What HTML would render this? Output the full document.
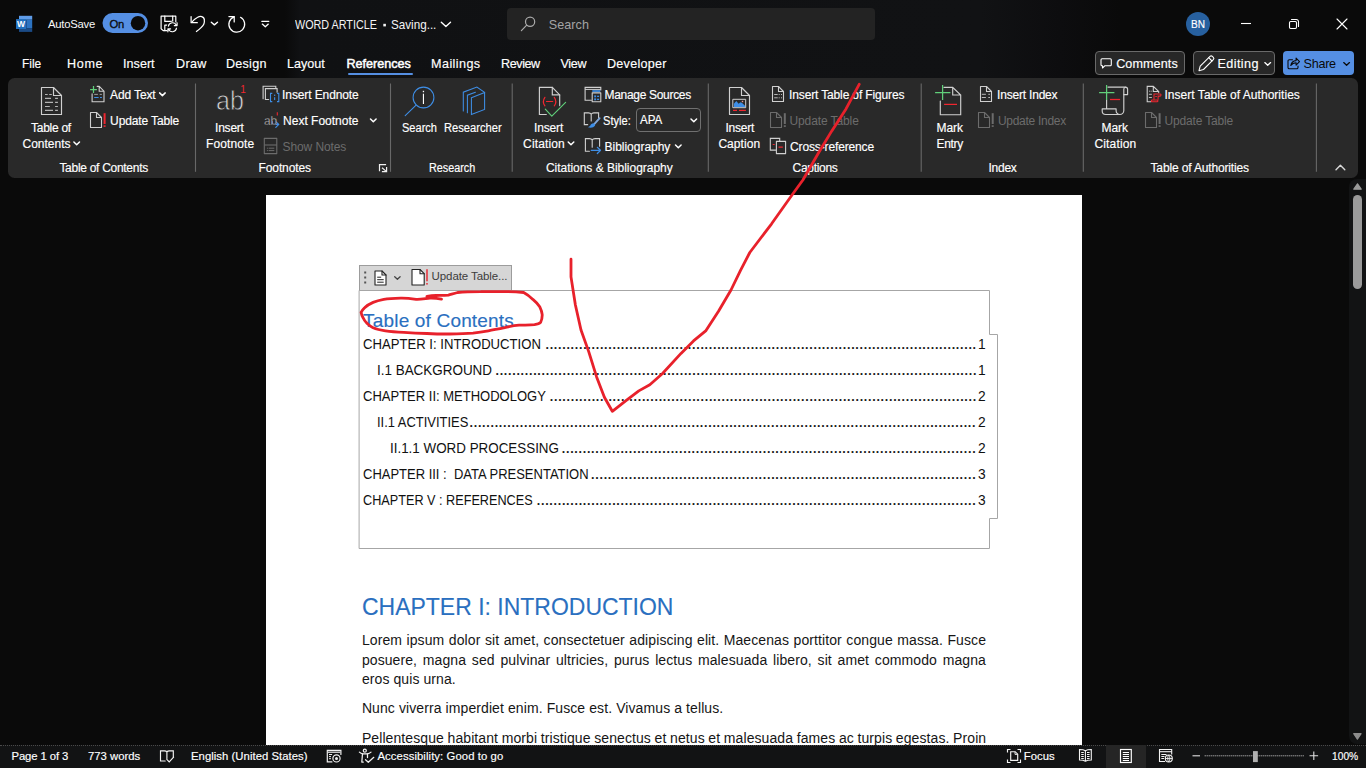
<!DOCTYPE html>
<html lang="en"><head><meta charset="utf-8"><title>WORD ARTICLE - Word</title>
<style>
html,body{margin:0;padding:0;}
body{width:1366px;height:768px;overflow:hidden;background:#0a0a0a;position:relative;font-family:"Liberation Sans",sans-serif;}
.t{position:absolute;white-space:pre;line-height:1;transform-origin:0 0;}
.b{position:absolute;box-sizing:border-box;}
svg.ov{position:absolute;left:0;top:0;}
</style></head><body>
<div class="b" style="left:0;top:0;width:1366px;height:78px;background:linear-gradient(90deg,#0a0a0a 0,#0a0a0a 285px,#101113 300px,#111214 980px,#0d0d0f 1060px,#0a0a0a 1120px,#0a0a0a 100%)"></div>
<div class="b" style="left:507px;top:8px;width:368px;height:32px;background:#232323;border-radius:4px"></div>
<div class="b" style="left:8px;top:78px;width:1350px;height:99.5px;background:#292929;border-radius:6.5px"></div>
<div class="b" style="left:266px;top:195px;width:815.5px;height:550px;background:#fff"></div>
<div class="b" style="left:1349px;top:179px;width:17px;height:565px;background:#121314;border-radius:8px 0 0 8px"></div>
<div class="b" style="left:1353px;top:194.5px;width:9px;height:94px;background:#9a9a9a;border-radius:4.5px"></div>
<div class="b" style="left:0;top:745px;width:1366px;height:23px;background:#121314;border-top:1px dotted #4a4a4a"></div>
<div class="b" style="left:1106px;top:745px;width:40px;height:23px;background:#252525"></div>
<div class="b" style="left:347.500px;top:72.700px;width:65px;height:2.500px;background:#558fe3;border-radius:1.200px"></div>
<div class="b" style="left:1095px;top:51px;width:90px;height:24px;background:#272727;border:1px solid #6a6a6a;border-radius:4px"></div>
<div class="b" style="left:1193px;top:51px;width:82px;height:24px;background:#272727;border:1px solid #6a6a6a;border-radius:4px"></div>
<div class="b" style="left:1283px;top:51px;width:71px;height:24px;background:#558fe3;border-radius:4px"></div>
<div class="b" style="left:636.300px;top:108.200px;width:64.500px;height:23.800px;border:1px solid #707070;border-radius:4px"></div>
<div class="b" style="left:359px;top:264.500px;width:153px;height:26.500px;background:#d6d6d6;border:1px solid #9c9c9c"></div>
<svg class="ov" width="1366" height="768" viewBox="0 0 1366 768" fill="none" stroke-linecap="round" stroke-linejoin="round" style="font-family:'Liberation Sans',sans-serif">
<g stroke="none"><rect x="19" y="15.800" width="13.200" height="3.900" fill="#5f9ce8"/><rect x="19" y="19.600" width="13.200" height="8.600" fill="#2c73c2"/><rect x="19" y="28.100" width="13.200" height="3.800" fill="#1b4b86"/><rect x="25.800" y="20" width="1" height="8.500" fill="#1d4f8c"/><rect x="16" y="19.100" width="10" height="9.900" fill="#2370bf"/><text x="21" y="27.300" font-size="8.500" font-weight="700" fill="#fff" text-anchor="middle">W</text></g>
<rect x="102.5" y="13" width="45.5" height="20" rx="10" fill="#558fe3" stroke="none"/><circle cx="138" cy="23.2" r="7.2" fill="#0a0a0a" stroke="none"/>
<g stroke="#fff" stroke-width="1.2"><path d="M167.2 30.600H163.200L161.100 28.700V16.100H175.800V22.500"/><path d="M164.800 16.100V21.400H172.700V16.100"/><path d="M164.800 30.600V25.200H167"/><circle cx="172.600" cy="27.300" r="5.900" fill="#0a0a0a" stroke="none"/><path d="M168.400 26.200A4.100 4.100 0 0 1 176.300 25.400M177.100 22.700V25.600H174.300" stroke-width="1.150"/><path d="M176.500 28.200A4.100 4.100 0 0 1 168.600 29.100M167.900 31.800V28.900H170.600" stroke-width="1.150"/></g>
<g stroke="#fff" stroke-width="1.25"><path d="M191.100 16.600V22.700H197.300"/><path d="M191.600 22.300C193.600 19.800 195.500 18.400 197.300 17.500C199 16.600 200.500 16.300 201.700 16.600C203.300 17 204.200 18.200 204.300 19.700C204.500 21.200 204.400 22.600 203.900 24.100C202.800 26.500 200.500 28.600 196.400 31.500"/><path d="M211.300 22.300l3.100 2.600 3.100-2.600" stroke-width="1.400"/></g>
<g stroke="#fff" stroke-width="1.25"><path d="M228.900 16.600H234.200V21.900"/><path d="M240.500 17.300A7.900 7.900 0 1 1 234.200 16.800"/></g>
<g stroke="#fff" stroke-width="1.3"><path d="M261.800 21.300h7"/><path d="M262.300 24.100l3 2.700 3-2.700"/></g>
<rect x="383.300" y="23.800" width="2.600" height="2.600" fill="#f4f4f4" stroke="none"/>
<path d="M441.300 22.200l4.600 4.300 4.600-4.300" stroke="#fff" stroke-width="1.400"/>
<g stroke="#ababab" stroke-width="1.200"><circle cx="530.100" cy="21.700" r="4.600"/><path d="M526.700 25.200L521.400 30.700"/></g>
<circle cx="1198" cy="24" r="12" fill="#27609f" stroke="none"/>
<g stroke="#fff" stroke-width="1.100"><path d="M1241 23.500H1251" stroke-linecap="butt"/><rect x="1289.500" y="21.500" width="7" height="7" rx="1.200"/><path d="M1291.500 19.500H1296.300A2.200 2.200 0 0 1 1298.500 21.700V26.500"/><path d="M1337 19L1347 29M1347 19L1337 29"/></g>
<path d="M1102 58.700h8.300a1 1 0 0 1 1 1v5a1 1 0 0 1-1 1h-5.300l-2.500 2.300v-2.300h-.500a1 1 0 0 1-1-1v-5a1 1 0 0 1 1-1z" stroke="#fff" stroke-width="1.100"/>
<g stroke="#fff" stroke-width="1.100"><path d="M1199 70.700l1.200-4.500 9.800-9.800a1.700 1.700 0 0 1 2.400 0l.900.900a1.700 1.700 0 0 1 0 2.400l-9.800 9.800z"/><path d="M1208.700 57.700l3.300 3.300"/></g>
<path d="M1264.800 62.600l2.900 2.700 2.900-2.700" stroke="#fff" stroke-width="1.300"/>
<g stroke="#0a0a0a" stroke-width="1.100"><path d="M1292.500 59.700h-3.200a1.300 1.300 0 0 0-1.300 1.300v6.400a1.300 1.300 0 0 0 1.300 1.300h7.400a1.300 1.300 0 0 0 1.300-1.300v-1.400"/><path d="M1290.800 65.500c.600-3 2.600-4.800 5.300-4.900v-2.500l3.400 3.500-3.400 3.500v-2.400c-2.300 0-3.900.800-5.300 2.800z"/></g>
<path d="M1343.700 62.600l2.900 2.700 2.900-2.700" stroke="#0a0a0a" stroke-width="1.300"/>
<path d="M195.5 83.500V171.800" stroke="#686868" stroke-width="1.100" stroke-linecap="butt"/>
<path d="M390.5 83.500V171.800" stroke="#686868" stroke-width="1.100" stroke-linecap="butt"/>
<path d="M512.2 83.500V171.800" stroke="#686868" stroke-width="1.100" stroke-linecap="butt"/>
<path d="M708.3 83.500V171.800" stroke="#686868" stroke-width="1.100" stroke-linecap="butt"/>
<path d="M921.2 83.500V171.800" stroke="#686868" stroke-width="1.100" stroke-linecap="butt"/>
<path d="M1083.3 83.500V171.800" stroke="#686868" stroke-width="1.100" stroke-linecap="butt"/>
<path d="M1316.4 83.500V171.800" stroke="#686868" stroke-width="1.100" stroke-linecap="butt"/>
<path d="M41.5 87.5h12.0l8 8v19.0h-20.0z" stroke="#d0d0d0" stroke-width="1.15"/><path d="M53.5 87.5v8h8" stroke="#d0d0d0" stroke-width="1.15"/>
<g stroke="#b4b4b4" stroke-width="1.150" stroke-linecap="butt"><path d="M45 94.500H47.700M49.200 94.500H51.800"/><path d="M45 98.400H51M55.100 98.400H57.900"/><path d="M45 102.400H53M55.100 102.400H57.900"/><path d="M45 106.500H49.800M55.100 106.500H57.900"/><path d="M45 110.400H53M55.100 110.400H57.900"/></g>
<path d="M73.9 142l2.8 2.7l2.8 -2.7" stroke="#ffffff" stroke-width="1.5"/>
<path d="M97.200 86.400H99.200L104 91.200V101.700H92.100V93.900M99.200 86.400V91.200H104" stroke="#d0d0d0" stroke-width="1.100" stroke-linejoin="miter"/>
<path d="M90.100 89.500H96.900M93.500 86.100V92.900" stroke="#60cf7a" stroke-width="1.250" stroke-linecap="butt"/>
<path d="M94.200 94.400H97.900M99.700 94.400H101.900" stroke="#9c9c9c" stroke-width="1" stroke-linecap="butt"/>
<path d="M94.200 97.500H98.600M100 97.500H101.900" stroke="#3e8ee6" stroke-width="1.100" stroke-linecap="butt"/>
<path d="M159.6 92.9l2.8 2.7l2.8 -2.7" stroke="#ffffff" stroke-width="1.5"/>
<path d="M90.5 112.5h6.0l5 5v10.0h-11.0z" stroke="#d0d0d0" stroke-width="1.1"/><path d="M96.5 112.5v5h5" stroke="#d0d0d0" stroke-width="1.1"/><path d="M104.6 113.200V124" stroke="#f0262f" stroke-width="2" stroke-linecap="butt"/><rect x="103.6" y="125.300" width="2" height="1.600" fill="#f0262f" stroke="none"/>
<path d="M263.100 98.800V86.300H275.800V88" stroke="#d0d0d0" stroke-width="1.100" stroke-linejoin="miter"/><path d="M268.700 99.500H265.400V88.600H277.100V92.200" stroke="#d0d0d0" stroke-width="1.100" stroke-linejoin="miter"/><path d="M272.300 93.400H270.500V101.600H272.300M277 93.400H278.800V101.600H277" stroke="#3e8ee6" stroke-width="1.100" stroke-linejoin="miter" stroke-linecap="butt"/><path d="M274.650 97.200V100.100" stroke="#3e8ee6" stroke-width="1.100" stroke-linecap="butt"/><rect x="274.050" y="94.600" width="1.200" height="1.300" fill="#3e8ee6" stroke="none"/>
<path d="M277.300 112.300V115.600" stroke="#f0262f" stroke-width="1.100" stroke-linecap="butt"/>
<path d="M272.300 121.500c-.100 1.900.200 2.900 1.600 2.900H278.300M275.800 121.600L278.800 124.400L275.800 127.400" stroke="#3e8ee6" stroke-width="1.200"/>
<path d="M370.5 119l2.8 2.7l2.8 -2.7" stroke="#ffffff" stroke-width="1.5"/>
<rect x="264.300" y="138.400" width="12.500" height="15.200" stroke="#6c6c6c" stroke-width="1.100"/><path d="M264.300 145H276.800" stroke="#6c6c6c" stroke-width="1.100" stroke-linecap="butt"/><path d="M266.900 148.200h1M268.700 148.200h5.600M266.900 150.600h1M268.700 150.600h5.600" stroke="#6c6c6c" stroke-width="1" stroke-linecap="butt"/>
<path d="M379.500 171.200V164.600H386.100M382 167.800L386 171.100M386.600 166.900V171.600H381.900" stroke="#f0f0f0" stroke-width="1.200" stroke-linecap="butt" stroke-linejoin="miter"/>
<circle cx="423.500" cy="97.500" r="10.400" stroke="#3e8ee6" stroke-width="1.050"/><path d="M416.100 105.100L405.200 115.700" stroke="#3e8ee6" stroke-width="1.100"/><path d="M423.450 93.700v10.300" stroke="#fff" stroke-width="1.150" stroke-linecap="butt"/><rect x="422.800" y="90.800" width="1.300" height="1.400" fill="#fff" stroke="none"/>
<g stroke="#3e8ee6" stroke-width="1.050" stroke-linejoin="miter"><path d="M463.300 110.900V92.200L476.900 87.100L484.600 92.400"/><path d="M467.400 112.700V95.200L475.400 92.200"/><path d="M471.400 97.700L484.600 92.600V109.500L471.400 114.600Z"/></g>
<path d="M546.300 114.500H539.400V87.400H552.300L559.700 94.900V105.600" stroke="#d0d0d0" stroke-width="1.150" stroke-linejoin="miter"/><path d="M552.300 87.400V94.900H559.700" stroke="#d0d0d0" stroke-width="1.150" stroke-linejoin="miter"/>
<path d="M544.900 97.300C543 100 543 103.200 544.900 105.800M554.300 97.300C556.200 100 556.200 103.200 554.300 105.800M546.500 101.500h6.200" stroke="#f0262f" stroke-width="1.200"/>
<path d="M545.300 109.200L551.800 116.200L565.600 102.300" stroke="#60cf7a" stroke-width="1.150"/>
<path d="M568.2 142l2.8 2.7l2.8 -2.7" stroke="#ffffff" stroke-width="1.5"/>
<path d="M591.400 100.300H585.100V87.400H600.800V90" stroke="#d0d0d0" stroke-width="1.100" stroke-linejoin="miter"/><path d="M585.100 89.400H600.800" stroke="#d0d0d0" stroke-width="1" stroke-linecap="butt"/><rect x="592.200" y="92.900" width="8.600" height="8.900" stroke="#d0d0d0" stroke-width="1.100"/><rect x="592.300" y="90.200" width="8" height="1.700" fill="#3e8ee6" stroke="none"/><g fill="#3e8ee6" stroke="none"><rect x="594.200" y="95.400" width="1.900" height="1.900"/><rect x="597.100" y="95.700" width="2" height="1.300"/><rect x="594.200" y="98.400" width="1.900" height="1.900"/><rect x="597.100" y="98.700" width="2" height="1.300"/></g>
<path d="M587.700 124.600H584.300V112.900H588.500C589.800 112.900 590.700 113.400 591.200 114.200C591.700 113.400 592.600 112.900 593.900 112.900H598.600V117.600M591.200 114.200V121" stroke="#d0d0d0" stroke-width="1.100" stroke-linejoin="miter"/><path d="M599.600 118.200L593.600 124.800" stroke="#7fa6d9" stroke-width="1.900"/><path d="M593.900 123.600c-1.300-.500-2.600 0-3.300 1.300-.500.900-1.300 1.700-2.700 2.300 2.800 1 5.800.400 7-1.500.500-.800.100-1.600-1-2.100z" fill="#3e8ee6" stroke="none"/>
<path d="M691 119l2.8 2.7l2.8 -2.7" stroke="#ffffff" stroke-width="1.5"/>
<path d="M589.400 151.300H585.400V138.600H589.400C590.800 138.600 591.700 139.100 592.200 139.900C592.700 139.100 593.600 138.600 595 138.600H599.600V146.200M592.200 139.900V147.300" stroke="#d0d0d0" stroke-width="1.100" stroke-linejoin="miter"/><path d="M591.200 150.300H600.300M597.300 147.300L600.500 150.300L597.300 153.500" stroke="#3e8ee6" stroke-width="1.200"/>
<path d="M675.5 145l2.8 2.7l2.8 -2.7" stroke="#ffffff" stroke-width="1.5"/>
<path d="M729.5 87.5h12.0l8 8v19.0h-20.0z" stroke="#d0d0d0" stroke-width="1.15"/><path d="M741.5 87.5v8h8" stroke="#d0d0d0" stroke-width="1.15"/>
<rect x="733.200" y="99.300" width="12.500" height="8.400" stroke="#d0d0d0" stroke-width="1"/><path d="M733.900 107v-3.200l2.400-2.700 2.300 2.600 1.900-1.500 1.600.900 2.900 2.700v1.200z" fill="#3e8ee6" stroke="none"/><rect x="741.800" y="100.800" width="1.400" height="1.400" fill="#e89a9a" stroke="none"/><path d="M733 110.400H737M739 110.400H745.900" stroke="#f0262f" stroke-width="1.300" stroke-linecap="butt"/>
<path d="M772.5 86.5h6.0l5 5v10.0h-11.0z" stroke="#d0d0d0" stroke-width="1.1"/><path d="M778.5 86.5v5h5" stroke="#d0d0d0" stroke-width="1.1"/>
<path d="M774.200 94.500H777.700M778.700 94.500H779.700M781 94.500H782M774.200 97.800H777.700M778.700 97.800H779.700M781 97.800H782" stroke="#b8b8b8" stroke-width="1" stroke-linecap="butt"/>
<path d="M770.5 112.5h6.0l5 5v10.0h-11.0z" stroke="#6c6c6c" stroke-width="1.1"/><path d="M776.5 112.5v5h5" stroke="#6c6c6c" stroke-width="1.1"/><path d="M784.8 113.200V124" stroke="#6c6c6c" stroke-width="2" stroke-linecap="butt"/><rect x="783.8" y="125.300" width="2" height="1.600" fill="#6c6c6c" stroke="none"/>
<path d="M775.700 150.100H770.300V138.400H779.700V141.200" stroke="#d0d0d0" stroke-width="1.100" stroke-linejoin="miter"/><rect x="776.400" y="141.400" width="9.200" height="12.200" stroke="#d0d0d0" stroke-width="1.100"/><path d="M772.700 144.500H774.700M778.500 147.200H782.800" stroke="#f0262f" stroke-width="1.200" stroke-linecap="butt"/>
<path d="M943.900 87.300H952.700L960.700 95V114.700H940.300V101.100M952.700 87.300V95H960.700" stroke="#d0d0d0" stroke-width="1.150" stroke-linejoin="miter"/>
<path d="M935.100 92.500H950.400M942.600 85.100V100" stroke="#60cf7a" stroke-width="1.250" stroke-linecap="butt"/>
<path d="M944.100 104.400H957" stroke="#f0262f" stroke-width="1.250" stroke-linecap="butt"/>
<path d="M980.5 86.5h6.0l5 5v10.0h-11.0z" stroke="#d0d0d0" stroke-width="1.1"/><path d="M986.5 86.5v5h5" stroke="#d0d0d0" stroke-width="1.1"/>
<path d="M981.800 94.300H985.900M988.300 94.300H990M981.800 97.500H985.900M988.300 97.500H990" stroke="#b8b8b8" stroke-width="1" stroke-linecap="butt"/>
<path d="M978.5 112.5h6.0l5 5v10.0h-11.0z" stroke="#6c6c6c" stroke-width="1.1"/><path d="M984.5 112.5v5h5" stroke="#6c6c6c" stroke-width="1.1"/><path d="M992.7 113.200V124" stroke="#6c6c6c" stroke-width="2" stroke-linecap="butt"/><rect x="991.7" y="125.300" width="2" height="1.600" fill="#6c6c6c" stroke="none"/>
<path d="M1106.600 100V108.800M1107.900 87.100H1125.400A2.200 2.200 0 0 1 1127.600 89.300V94.600H1123.800V110.500A4 4 0 0 1 1119.800 114.500H1105.700A3.500 3.500 0 0 1 1102.200 111V108.800H1116.100V110.800A3.700 3.700 0 0 0 1119.800 114.500" stroke="#d0d0d0" stroke-width="1.150"/><path d="M1123.800 94.600V89.300A2 2 0 0 1 1125.600 87.200" stroke="#d0d0d0" stroke-width="1.150"/>
<path d="M1099.100 92.500H1114.400M1106.600 85.100V100" stroke="#60cf7a" stroke-width="1.250" stroke-linecap="butt"/>
<path d="M1110 99.500H1120.100" stroke="#f0262f" stroke-width="1.250" stroke-linecap="butt"/>
<path d="M1150.900 101.700H1147.200V86.400H1153.300L1158.700 91.500V92.600M1153.300 86.400V91.500H1158.700" stroke="#d0d0d0" stroke-width="1.100" stroke-linejoin="miter"/><path d="M1149.100 91.200h1M1150.700 91.200h1M1148.900 94.300H1151.900M1148.900 97.500H1151.900" stroke="#b8b8b8" stroke-width="1" stroke-linecap="butt"/><path d="M1154 99.800V93.900H1159.900a1.100 1.100 0 0 1 0 2.200H1158.100V99.800M1155.300 96.500h1.500" stroke="#f0262f" stroke-width="1.050" stroke-linejoin="miter" stroke-linecap="butt"/><rect x="1151.400" y="99.900" width="6.500" height="1.900" rx=".900" stroke="#f0262f" stroke-width="1.050"/>
<path d="M1145.5 112.5h6.0l5 5v10.0h-11.0z" stroke="#6c6c6c" stroke-width="1.1"/><path d="M1151.5 112.5v5h5" stroke="#6c6c6c" stroke-width="1.1"/><path d="M1159.6 113.200V124" stroke="#6c6c6c" stroke-width="2" stroke-linecap="butt"/><rect x="1158.6" y="125.300" width="2" height="1.600" fill="#6c6c6c" stroke="none"/>
<path d="M1336 169.700l4.400-4.400 4.400 4.400" stroke="#d8d8d8" stroke-width="1.400"/>
<path d="M359.500 290.500H989.500V334.500H997.500V518.500H989.500V548.500H359.500z" stroke="#a6a6a6" stroke-width="1" stroke-linejoin="miter"/>
<g fill="#555" stroke="none"><rect x="364.200" y="271.500" width="2" height="2"/><rect x="364.200" y="276.500" width="2" height="2"/><rect x="364.200" y="281.500" width="2" height="2"/></g>
<path d="M375 271h7l4 4v10h-11z" fill="#fff" stroke="#222" stroke-width="1.100"/><path d="M382 271v4h4" stroke="#222" stroke-width="1.100"/><path d="M377.200 277.200h4M377.200 279.700h6.500M377.200 282.200h6.500" stroke="#222" stroke-width="1" stroke-linecap="butt"/>
<path d="M394.700 276.700l2.700 2.600 2.700-2.600" stroke="#444" stroke-width="1.300"/>
<path d="M412 269.500h8l4.200 4.200v11.300h-12.200z" fill="#fff" stroke="#222" stroke-width="1.100"/><path d="M420 269.500v4.200h4.200" stroke="#222" stroke-width="1.100"/><path d="M427 269.300v12" stroke="#e8212b" stroke-width="1.400" stroke-linecap="butt"/><rect x="426.300" y="283" width="1.400" height="1.600" fill="#e8212b" stroke="none"/>
<g stroke="#f4f4f4" stroke-width="1.150" stroke-linejoin="miter"><path d="M165.200 761H160.500V750.800H164.500C165.800 750.800 166.500 751.300 166.900 752C167.300 751.300 168 750.800 169.300 750.800H173.300V757M166.900 752V758.500"/><path d="M166.800 759.300L169.200 761.800L173.600 757.200"/></g>
<g stroke="#f0f0f0" stroke-width="1.200" stroke-linejoin="miter"><path d="M331.900 761.900H327.300V750.300H340.900V754.400"/><path d="M328 752.200H340.200" stroke-linecap="butt"/><path d="M329 754.500H332.100M329 756.600H331M329 758.700H331" stroke-width="1" stroke-linecap="butt"/><circle cx="336.500" cy="758.400" r="3.600"/><circle cx="336.500" cy="758.400" r="1.500" fill="#f0f0f0" stroke="none"/></g>
<g stroke="#f0f0f0" stroke-width="1.250"><circle cx="364.800" cy="750.700" r="1.500"/><path d="M359.400 752.100Q361 753.500 362.600 753.800H367.400Q369.400 753.500 371 752.100"/><path d="M362.500 753.800L361.800 762.100H363.300M367.500 753.800V757.600"/><path d="M365.500 759.700L368.300 762.300L373.800 757.300"/></g>
<g stroke="#f4f4f4" stroke-width="1.150" stroke-linejoin="miter" stroke-linecap="butt"><path d="M1007.500 752.500V749.500H1010.500M1017.500 749.500H1020.500V752.500M1020.500 759.500V762.500H1017.500M1010.500 762.500H1007.500V759.500"/><path d="M1010.700 751.700H1015.200L1017.700 754.200V760.300H1010.700Z"/><path d="M1015 751.900V754.400H1017.500" stroke-width=".900"/></g>
<g stroke="#f4f4f4" stroke-width="1.100" stroke-linejoin="miter" stroke-linecap="butt"><path d="M1085.400 750.700C1084 749.800 1082 749.500 1079.500 749.500V760C1082 760 1084 760.300 1085.400 761.200C1086.800 760.300 1088.800 760 1091.300 760V749.500C1088.800 749.500 1086.800 749.800 1085.400 750.700ZM1085.400 750.700V761.200"/><path d="M1081.200 752.500H1083.800M1081.200 754.500H1083.800M1081.200 756.500H1083.800M1081.200 758.500H1083.800M1087 752.500H1089.600M1087 754.500H1089.600M1087 756.500H1089.600M1087 758.500H1089.600" stroke-width="1"/></g>
<g stroke="#ffffff" stroke-width="1.150" stroke-linecap="butt" stroke-linejoin="miter"><rect x="1120.500" y="749.500" width="10.800" height="13"/><path d="M1122.800 752.500H1129M1122.800 754.500H1129M1122.800 756.500H1129M1122.800 758.500H1129M1122.800 760.500H1129" stroke-width="1"/></g>
<g stroke="#f4f4f4" stroke-width="1.100" stroke-linecap="butt" stroke-linejoin="miter"><path d="M1165 761.500H1159.500V749.500H1171.700V754.500"/><path d="M1159.500 751.700H1171.700"/><path d="M1161.300 754.500H1166.500M1161.300 756.500H1164.500M1161.300 758.500H1164" stroke-width="1"/><circle cx="1168.800" cy="758.500" r="3.500" fill="#121314"/><path d="M1165.300 758.500H1172.300M1168.800 755C1167.300 757 1167.300 760 1168.800 762M1168.800 755C1170.300 757 1170.300 760 1168.800 762" stroke-width=".900"/></g>
<path d="M1192.500 755.800h7.500" stroke="#e0e0e0" stroke-width="1.100" stroke-linecap="butt"/><path d="M1204.700 755.800h100" stroke="#d4d4d4" stroke-width="1" stroke-linecap="butt" stroke-dasharray="1 1"/><rect x="1253" y="751.100" width="4.800" height="11" fill="#b0b0b0" stroke="none"/><path d="M1309.500 755.800h8.600M1313.800 751.500v8.600" stroke="#e0e0e0" stroke-width="1.100" stroke-linecap="butt"/>
<path d="M1353.800 189.200L1357.500 183.800L1361.200 189.200Z" fill="#9a9a9a" stroke="#9a9a9a" stroke-width="1.200"/>
<path d="M1353.700 733.700L1357.400 739.200L1361.100 733.700Z" fill="#8c8c8c" stroke="#8c8c8c" stroke-width="1.200"/>
</svg>
<div class="t" style="left:48.00px;top:19.43px;color:#f8f8f8;font-size:11.3px;letter-spacing:-0.257px;">AutoSave</div>
<div class="t" style="left:109.50px;top:19.43px;color:#0a0a0a;font-size:11.3px;letter-spacing:-0.200px;-webkit-text-stroke:.3px #0a0a0a;">On</div>
<div class="t" style="left:295.00px;top:18.50px;color:#f4f4f4;font-size:12.4px;transform:scaleX(0.8703);">WORD ARTICLE</div>
<div class="t" style="left:390.90px;top:18.50px;color:#f4f4f4;font-size:12.4px;transform:scaleX(0.9407);">Saving...</div>
<div class="t" style="left:548.80px;top:19.33px;color:#a3a3a3;font-size:12.6px;letter-spacing:0.040px;">Search</div>
<div class="t" style="left:1190.70px;top:18.52px;color:#fff;font-size:11.2px;transform:scaleX(0.9003);-webkit-text-stroke:.16px #fff;">BN</div>
<div class="t" style="left:21.50px;top:58.33px;color:#fff;font-size:12.6px;transform:scaleX(0.9474);-webkit-text-stroke:.16px #fff;">File</div>
<div class="t" style="left:67.00px;top:58.33px;color:#fff;font-size:12.6px;letter-spacing:0.667px;-webkit-text-stroke:.16px #fff;">Home</div>
<div class="t" style="left:123.10px;top:58.33px;color:#fff;font-size:12.6px;-webkit-text-stroke:.16px #fff;">Insert</div>
<div class="t" style="left:176.00px;top:58.33px;color:#fff;font-size:12.6px;letter-spacing:0.333px;-webkit-text-stroke:.16px #fff;">Draw</div>
<div class="t" style="left:226.00px;top:58.33px;color:#fff;font-size:12.6px;letter-spacing:0.240px;-webkit-text-stroke:.16px #fff;">Design</div>
<div class="t" style="left:287.00px;top:58.33px;color:#fff;font-size:12.6px;-webkit-text-stroke:.16px #fff;">Layout</div>
<div class="t" style="left:431.10px;top:58.33px;color:#fff;font-size:12.6px;letter-spacing:0.400px;-webkit-text-stroke:.16px #fff;">Mailings</div>
<div class="t" style="left:501.10px;top:58.33px;color:#fff;font-size:12.6px;letter-spacing:-0.440px;-webkit-text-stroke:.16px #fff;">Review</div>
<div class="t" style="left:560.50px;top:58.33px;color:#fff;font-size:12.6px;letter-spacing:-0.333px;-webkit-text-stroke:.16px #fff;">View</div>
<div class="t" style="left:607.00px;top:58.33px;color:#fff;font-size:12.6px;letter-spacing:0.250px;-webkit-text-stroke:.16px #fff;">Developer</div>
<div class="t" style="left:346.50px;top:58.33px;color:#fff;font-size:12.6px;-webkit-text-stroke:.5px #fff;">References</div>
<div class="t" style="left:1116.20px;top:58.33px;color:#fff;font-size:12.6px;letter-spacing:0.086px;-webkit-text-stroke:.16px #fff;">Comments</div>
<div class="t" style="left:1217.40px;top:58.33px;color:#fff;font-size:12.6px;letter-spacing:0.433px;-webkit-text-stroke:.16px #fff;">Editing</div>
<div class="t" style="left:1303.50px;top:58.33px;color:#0a0a0a;font-size:12.6px;letter-spacing:-0.250px;">Share</div>
<div class="t" style="left:59.40px;top:161.84px;color:#fff;font-size:12px;letter-spacing:-0.287px;-webkit-text-stroke:.16px #fff;">Table of Contents</div>
<div class="t" style="left:258.50px;top:161.84px;color:#fff;font-size:12px;letter-spacing:-0.100px;-webkit-text-stroke:.16px #fff;">Footnotes</div>
<div class="t" style="left:428.50px;top:161.84px;color:#fff;font-size:12px;transform:scaleX(0.9000);-webkit-text-stroke:.16px #fff;">Research</div>
<div class="t" style="left:545.90px;top:161.84px;color:#fff;font-size:12px;letter-spacing:-0.026px;-webkit-text-stroke:.16px #fff;">Citations &amp; Bibliography</div>
<div class="t" style="left:792.50px;top:161.84px;color:#fff;font-size:12px;letter-spacing:-0.286px;-webkit-text-stroke:.16px #fff;">Captions</div>
<div class="t" style="left:988.50px;top:161.84px;color:#fff;font-size:12px;letter-spacing:-0.250px;-webkit-text-stroke:.16px #fff;">Index</div>
<div class="t" style="left:1150.50px;top:161.84px;color:#fff;font-size:12px;letter-spacing:-0.147px;-webkit-text-stroke:.16px #fff;">Table of Authorities</div>
<div class="t" style="left:31.10px;top:121.84px;color:#fff;font-size:12px;letter-spacing:-0.286px;-webkit-text-stroke:.16px #fff;">Table of</div>
<div class="t" style="left:22.50px;top:137.84px;color:#fff;font-size:12px;-webkit-text-stroke:.16px #fff;">Contents</div>
<div class="t" style="left:110.00px;top:88.84px;color:#fff;font-size:12px;letter-spacing:-0.114px;-webkit-text-stroke:.16px #fff;">Add Text</div>
<div class="t" style="left:110.10px;top:114.84px;color:#fff;font-size:12px;letter-spacing:-0.127px;-webkit-text-stroke:.16px #fff;">Update Table</div>
<div class="t" style="left:215.60px;top:87.30px;color:#d2d2d2;font-size:28px;transform:scaleX(0.8939);-webkit-text-stroke:.8px #292929;">ab</div>
<div class="t" style="left:240.30px;top:84.53px;color:#f0262f;font-size:10px;">1</div>
<div class="t" style="left:215.10px;top:121.84px;color:#fff;font-size:12px;letter-spacing:-0.240px;-webkit-text-stroke:.16px #fff;">Insert</div>
<div class="t" style="left:206.10px;top:137.84px;color:#fff;font-size:12px;letter-spacing:0.086px;-webkit-text-stroke:.16px #fff;">Footnote</div>
<div class="t" style="left:282.10px;top:88.84px;color:#fff;font-size:12px;letter-spacing:-0.108px;-webkit-text-stroke:.16px #fff;">Insert Endnote</div>
<div class="t" style="left:263.70px;top:113.57px;color:#c8c8c8;font-size:13.5px;transform:scaleX(0.8817);-webkit-text-stroke:.35px #292929;">ab</div>
<div class="t" style="left:283.10px;top:114.84px;color:#fff;font-size:12px;-webkit-text-stroke:.16px #fff;">Next Footnote</div>
<div class="t" style="left:282.60px;top:140.84px;color:#6c6c6c;font-size:12px;letter-spacing:-0.111px;">Show Notes</div>
<div class="t" style="left:402.40px;top:121.84px;color:#fff;font-size:12px;transform:scaleX(0.9193);-webkit-text-stroke:.16px #fff;">Search</div>
<div class="t" style="left:444.10px;top:121.84px;color:#fff;font-size:12px;transform:scaleX(0.9293);-webkit-text-stroke:.16px #fff;">Researcher</div>
<div class="t" style="left:534.00px;top:121.84px;color:#fff;font-size:12px;letter-spacing:-0.160px;-webkit-text-stroke:.16px #fff;">Insert</div>
<div class="t" style="left:523.10px;top:137.84px;color:#fff;font-size:12px;letter-spacing:0.143px;-webkit-text-stroke:.16px #fff;">Citation</div>
<div class="t" style="left:604.50px;top:88.84px;color:#fff;font-size:12px;letter-spacing:-0.308px;-webkit-text-stroke:.16px #fff;">Manage Sources</div>
<div class="t" style="left:603.10px;top:114.84px;color:#fff;font-size:12px;transform:scaleX(0.9246);-webkit-text-stroke:.16px #fff;">Style:</div>
<div class="t" style="left:639.50px;top:114.42px;color:#fff;font-size:12.5px;transform:scaleX(0.9256);-webkit-text-stroke:.16px #fff;">APA</div>
<div class="t" style="left:604.50px;top:140.84px;color:#fff;font-size:12px;letter-spacing:-0.018px;-webkit-text-stroke:.16px #fff;">Bibliography</div>
<div class="t" style="left:725.40px;top:121.84px;color:#fff;font-size:12px;letter-spacing:-0.200px;-webkit-text-stroke:.16px #fff;">Insert</div>
<div class="t" style="left:718.40px;top:137.84px;color:#fff;font-size:12px;letter-spacing:0.067px;-webkit-text-stroke:.16px #fff;">Caption</div>
<div class="t" style="left:789.10px;top:88.84px;color:#fff;font-size:12px;letter-spacing:-0.145px;-webkit-text-stroke:.16px #fff;">Insert Table of Figures</div>
<div class="t" style="left:789.50px;top:114.84px;color:#6c6c6c;font-size:12px;letter-spacing:-0.109px;">Update Table</div>
<div class="t" style="left:790.10px;top:140.84px;color:#fff;font-size:12px;letter-spacing:-0.143px;-webkit-text-stroke:.16px #fff;">Cross-reference</div>
<div class="t" style="left:936.50px;top:121.84px;color:#fff;font-size:12px;letter-spacing:-0.067px;-webkit-text-stroke:.16px #fff;">Mark</div>
<div class="t" style="left:936.50px;top:137.84px;color:#fff;font-size:12px;letter-spacing:-0.300px;-webkit-text-stroke:.16px #fff;">Entry</div>
<div class="t" style="left:997.10px;top:88.84px;color:#fff;font-size:12px;letter-spacing:-0.200px;-webkit-text-stroke:.16px #fff;">Insert Index</div>
<div class="t" style="left:997.90px;top:114.84px;color:#6c6c6c;font-size:12px;letter-spacing:-0.273px;">Update Index</div>
<div class="t" style="left:1101.50px;top:121.84px;color:#fff;font-size:12px;letter-spacing:-0.067px;-webkit-text-stroke:.16px #fff;">Mark</div>
<div class="t" style="left:1094.50px;top:137.84px;color:#fff;font-size:12px;letter-spacing:0.143px;-webkit-text-stroke:.16px #fff;">Citation</div>
<div class="t" style="left:1164.50px;top:88.84px;color:#fff;font-size:12px;letter-spacing:0.031px;-webkit-text-stroke:.16px #fff;">Insert Table of Authorities</div>
<div class="t" style="left:1164.50px;top:114.84px;color:#6c6c6c;font-size:12px;letter-spacing:-0.164px;">Update Table</div>
<div class="t" style="left:431.60px;top:270.97px;color:#3c3c3c;font-size:11.5px;letter-spacing:-0.086px;">Update Table...</div>
<div class="t" style="left:363.10px;top:310.52px;color:#2a6fc0;font-size:19px;letter-spacing:0.175px;-webkit-text-stroke:0.15px #2a6fc0;">Table of Contents</div>
<div class="t" style="left:362.50px;top:338.32px;color:#111;font-size:13.8px;transform:scaleX(0.9514);">CHAPTER I: INTRODUCTION</div>
<div class="t" style="left:545.44px;top:339.42px;color:#1a1a1a;font-size:12.5px;font-weight:700;letter-spacing:0.715px;">.......................................................................................................</div>
<div class="t" style="left:978.00px;top:338.32px;color:#111;font-size:13.8px;">1</div>
<div class="t" style="left:376.50px;top:364.32px;color:#111;font-size:13.8px;transform:scaleX(0.9744);">I.1 BACKGROUND</div>
<div class="t" style="left:495.48px;top:365.42px;color:#1a1a1a;font-size:12.5px;font-weight:700;letter-spacing:0.715px;">...................................................................................................................</div>
<div class="t" style="left:978.00px;top:364.32px;color:#111;font-size:13.8px;">1</div>
<div class="t" style="left:362.50px;top:390.32px;color:#111;font-size:13.8px;transform:scaleX(0.9430);">CHAPTER II: METHODOLOGY</div>
<div class="t" style="left:549.77px;top:391.42px;color:#1a1a1a;font-size:12.5px;font-weight:700;letter-spacing:0.715px;">......................................................................................................</div>
<div class="t" style="left:978.10px;top:390.32px;color:#111;font-size:13.8px;">2</div>
<div class="t" style="left:376.50px;top:416.32px;color:#111;font-size:13.8px;transform:scaleX(0.9375);">II.1 ACTIVITIES</div>
<div class="t" style="left:469.50px;top:417.42px;color:#1a1a1a;font-size:12.5px;font-weight:700;letter-spacing:0.715px;">.........................................................................................................................</div>
<div class="t" style="left:978.10px;top:416.32px;color:#111;font-size:13.8px;">2</div>
<div class="t" style="left:390.25px;top:442.32px;color:#111;font-size:13.8px;transform:scaleX(0.9709);">II.1.1 WORD PROCESSING</div>
<div class="t" style="left:561.76px;top:443.42px;color:#1a1a1a;font-size:12.5px;font-weight:700;letter-spacing:0.715px;">...................................................................................................</div>
<div class="t" style="left:978.10px;top:442.32px;color:#111;font-size:13.8px;">2</div>
<div class="t" style="left:362.50px;top:468.32px;color:#111;font-size:13.8px;transform:scaleX(0.9412);">CHAPTER III :  DATA PRESENTATION</div>
<div class="t" style="left:591.07px;top:469.42px;color:#1a1a1a;font-size:12.5px;font-weight:700;letter-spacing:0.715px;">............................................................................................</div>
<div class="t" style="left:978.10px;top:468.32px;color:#111;font-size:13.8px;">3</div>
<div class="t" style="left:362.50px;top:494.32px;color:#111;font-size:13.8px;transform:scaleX(0.9181);">CHAPTER V : REFERENCES</div>
<div class="t" style="left:536.78px;top:495.42px;color:#1a1a1a;font-size:12.5px;font-weight:700;letter-spacing:0.715px;">.........................................................................................................</div>
<div class="t" style="left:978.10px;top:494.32px;color:#111;font-size:13.8px;">3</div>
<div class="t" style="left:361.90px;top:595.38px;color:#2a6fc0;font-size:24px;transform:scaleX(0.9573);-webkit-text-stroke:0.12px #2a6fc0;">CHAPTER I: INTRODUCTION</div>
<div class="t" style="left:361.90px;top:633.15px;color:#161616;font-size:14px;word-spacing:0.517px;letter-spacing:0.09px;">Lorem ipsum dolor sit amet, consectetuer adipiscing elit. Maecenas porttitor congue massa. Fusce</div>
<div class="t" style="left:361.90px;top:653.15px;color:#161616;font-size:14px;word-spacing:1.767px;letter-spacing:0.09px;">posuere, magna sed pulvinar ultricies, purus lectus malesuada libero, sit amet commodo magna</div>
<div class="t" style="left:361.90px;top:672.15px;color:#161616;font-size:14px;letter-spacing:0.09px;">eros quis urna.</div>
<div class="t" style="left:361.90px;top:701.15px;color:#161616;font-size:14px;letter-spacing:0.093px;">Nunc viverra imperdiet enim. Fusce est. Vivamus a tellus.</div>
<div class="t" style="left:361.90px;top:731.15px;color:#161616;font-size:14px;word-spacing:-0.369px;letter-spacing:0.09px;">Pellentesque habitant morbi tristique senectus et netus et malesuada fames ac turpis egestas. Proin</div>
<div class="t" style="left:11.50px;top:751.43px;color:#fff;font-size:11.3px;letter-spacing:-0.100px;-webkit-text-stroke:.16px #fff;">Page 1 of 3</div>
<div class="t" style="left:88.00px;top:751.43px;color:#fff;font-size:11.3px;-webkit-text-stroke:.16px #fff;">773 words</div>
<div class="t" style="left:191.00px;top:751.43px;color:#fff;font-size:11.3px;letter-spacing:0.045px;-webkit-text-stroke:.16px #fff;">English (United States)</div>
<div class="t" style="left:377.50px;top:751.43px;color:#fff;font-size:11.3px;letter-spacing:0.083px;-webkit-text-stroke:.16px #fff;">Accessibility: Good to go</div>
<div class="t" style="left:1023.80px;top:751.43px;color:#fff;font-size:11.3px;-webkit-text-stroke:.16px #fff;">Focus</div>
<div class="t" style="left:1331.70px;top:751.43px;color:#fff;font-size:11.3px;transform:scaleX(0.9076);-webkit-text-stroke:.16px #fff;">100%</div>
<svg class="ov" width="1366" height="768" viewBox="0 0 1366 768" fill="none" stroke-linecap="round" stroke-linejoin="round" style="font-family:'Liberation Sans',sans-serif">
<path d="M441.500 299.200C437 298.200 433 298 429.900 298.100C425 298.600 420 299.600 416.100 299.300C410 298.400 405 298 400.700 298.100C394 298.300 388 298.700 383.800 299.400C379 300.300 376 301.200 373.100 302.400C369 304.200 366.500 305.800 364.600 307.800C362.800 309.600 361.700 311 361.100 312.400C361.500 314.500 362.200 316.200 363.100 317.800C364 320 365.300 321.700 366.900 323.200C368.800 325 370.800 326.500 373.100 327.800C376.500 329.300 380.500 330.200 385.400 330.900C391 331.700 397 332.100 403.800 332.400C411 333 419 333.400 426.900 333.500C435 333.900 442 334.100 449.900 334C458 333.900 466 333.700 473 333.200C478.500 332.600 483.500 331.800 488.400 330.900C493.500 329.900 498.500 328.800 503.700 327.800C509 326.600 514 325.600 519.100 325.200C524.500 325 530 325.100 534.500 324.700C537.500 324.300 539.500 323.600 540.600 322.400C541.800 320 542.300 317.500 542.200 314.700C541.900 312 541.100 309.500 539.900 307.100C538 304 535.600 301.600 532.900 299.400C530 296.600 527 294.300 523.700 292.500C517 291.800 510 291.600 503.700 291.700C496 291.500 488 291.500 480.700 291.700C472 291.700 464 291.900 457.600 292.500C454 293.400 451 294.400 448.400 295.100C444 295.500 440 295.400 436.100 295.500C432.500 295.700 429.500 296 426.900 296.300" stroke="#e8212b" stroke-width="2.800"/>
<path d="M571 259.2L571 276.9L575.4 305L581 330L588.8 351.9L596.6 376.9L604.4 397.2L612.3 411.3L626.3 400.3L638.8 390.9L649.8 384.7L662.3 373.8L681 353.4L693.5 340.9L706 330.6L718.5 311.3L731 290L740.4 270.6L749.8 252.5L771.6 223.8L790.4 197.2L802.9 180L818.6 152.8L831.8 130.9L846 108.9L859.2 84.3" stroke="#e8212b" stroke-width="2.800"/>
</svg>
</body></html>
